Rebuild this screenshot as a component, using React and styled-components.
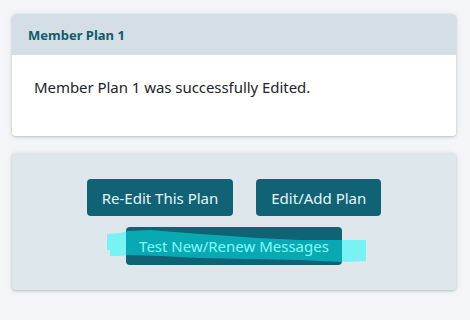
import styled, { createGlobalStyle } from 'styled-components';

const Global = createGlobalStyle`
  body {
    margin: 0;
    background: #f4f5f9;
    font-family: 'Noto Sans', 'Open Sans', sans-serif;
  }
`;

const Page = styled.div`
  display: flex;
  flex-direction: column;
  gap: 17px;
  padding: 14px 14px 14px 12px;
`;

const Card = styled.div`
  border-radius: 4px;
  overflow: hidden;
  background: ${(p) => p.bg || '#fff'};
  box-shadow: 0 1px 3px rgba(0, 0, 0, 0.22), 0 0 8px rgba(0, 0, 0, 0.05);
`;

const CardHeader = styled.div`
  height: 41px;
  display: flex;
  align-items: center;
  padding: 0 16px;
  background: #d3dfe5;
  color: #0f5c6e;
  font-weight: 700;
  font-size: 13px;
`;

const CardBody = styled.div`
  height: 81px;
  box-sizing: border-box;
  padding: 22px 22px 0;
  background: #fff;
  color: #212529;
  font-size: 15px;
  letter-spacing: -0.05px;
  border-radius: 4px;
`;

const ActionBody = styled.div`
  height: 137px;
  box-sizing: border-box;
  padding-top: 26px;
  display: flex;
  flex-direction: column;
  align-items: center;
  gap: 11px;
`;

const Row = styled.div`
  display: flex;
  gap: 23px;
`;

const Button = styled.button`
  position: relative;
  height: ${(p) => p.h || 37}px;
  padding: 0 ${(p) => p.px || 14}px;
  border: none;
  border-radius: 4px;
  background: #0f6375;
  color: #e8f4f6;
  font-family: inherit;
  font-size: 15px;
`;

const Marker = styled.svg`
  position: absolute;
  left: -20px;
  top: 0;
  width: 260px;
  height: 40px;
  pointer-events: none;
`;

export default function App() {
  return (
    <>
      <Global />
      <Page>
        <Card>
          <CardHeader>Member Plan 1</CardHeader>
          <CardBody>Member Plan 1 was successfully Edited.</CardBody>
        </Card>
        <Card bg="#dde7ec">
          <ActionBody>
            <Row>
              <Button px={15}>Re-Edit This Plan</Button>
              <Button px={15}>Edit/Add Plan</Button>
            </Row>
            <Button h={38} px={13}>
              Test New/Renew Messages
              <Marker viewBox="0 0 260 40">
                <polygon
                  fill="rgba(0,255,255,0.45)"
                  points="1,7 14,6 22,4 44,3 69,5 94,7 124,9 152,11 194,13 260,13 260,34 236,35 194,33 144,32 94,31 54,29 24,28 12,29 4,29 4,23 1,23"
                />
              </Marker>
            </Button>
          </ActionBody>
        </Card>
      </Page>
    </>
  );
}
